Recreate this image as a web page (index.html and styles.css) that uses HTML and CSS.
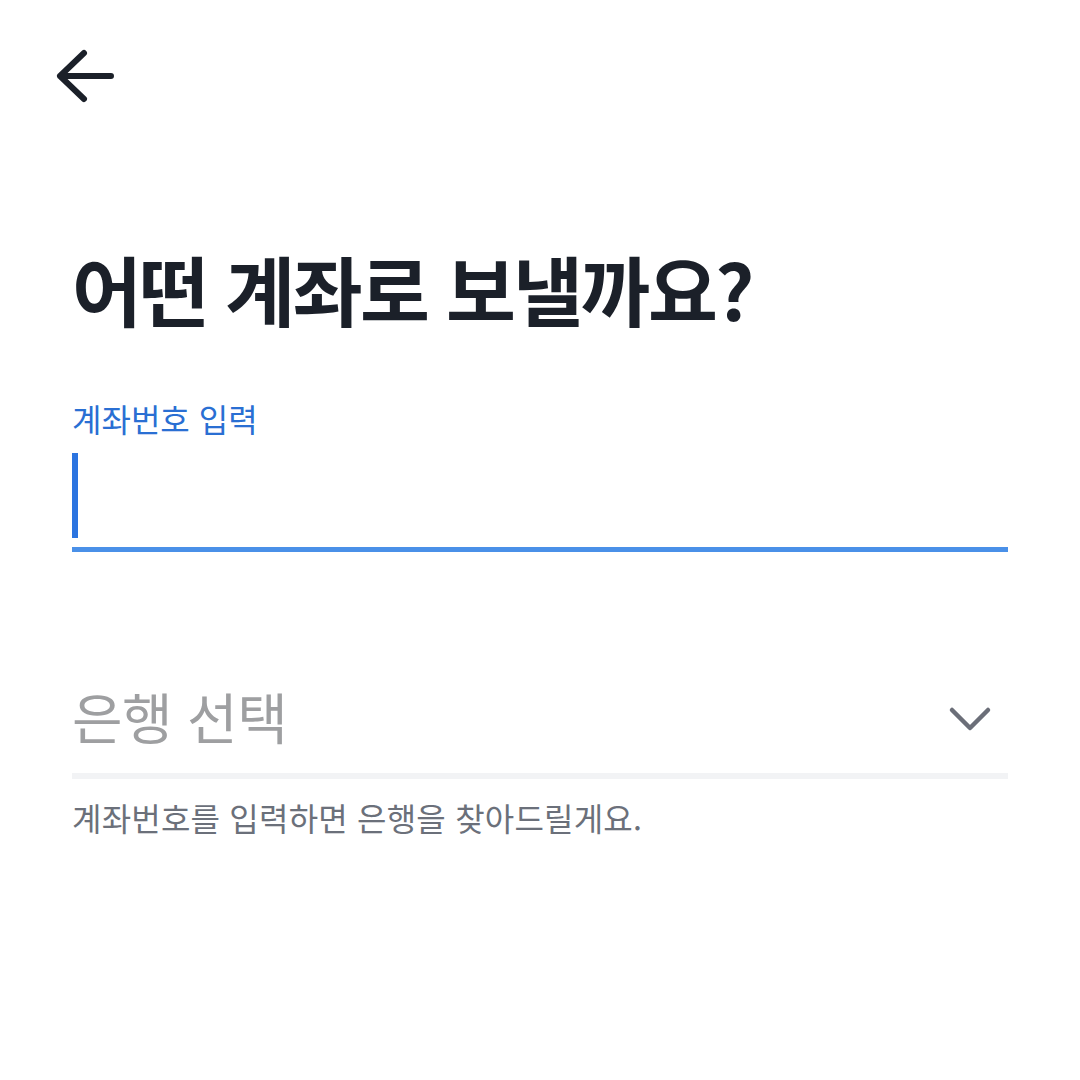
FILE: index.html
```html
<!DOCTYPE html>
<html lang="ko">
<head>
<meta charset="utf-8">
<link rel="stylesheet" href="styles.css">
</head>
<body>
<div class="page">
  <header class="topbar">
    <button class="back" aria-label="뒤로">
      <svg width="64" height="60" viewBox="0 0 64 60">
        <path d="M6 30 H57 M30 7 L6 30 L30 53" fill="none" stroke="#1b2029" stroke-width="6" stroke-linecap="round" stroke-linejoin="round"/>
      </svg>
    </button>
  </header>
  <h1 class="title">어떤 계좌로 보낼까요?</h1>
  <div class="field">
    <label class="field-label">계좌번호 입력</label>
    <div class="input-box"><span class="caret"></span></div>
  </div>
  <div class="bank">
    <div class="bank-row">
      <span class="bank-placeholder">은행 선택</span>
      <svg class="chev" width="44" height="30" viewBox="0 0 44 30">
        <path d="M4 5 L22 23 L40 5" fill="none" stroke="#6b6e78" stroke-width="4.5" stroke-linecap="round" stroke-linejoin="round"/>
      </svg>
    </div>
    <div class="bank-line"></div>
    <p class="hint">계좌번호를 입력하면 은행을 찾아드릴게요.</p>
  </div>
</div>
</body>
</html>
```
FILE: styles.css
```css
html, body {
  margin: 0;
  padding: 0;
  background: #ffffff;
}
body {
  font-family: "Noto Sans CJK KR", "Noto Sans", sans-serif;
  color: #1b2029;
}
.page {
  padding: 0 72px;
}
.topbar {
  height: 150px;
  display: flex;
  align-items: flex-start;
}
.back {
  margin: 46px 0 0 -18px;
  padding: 0;
  border: 0;
  background: none;
  display: block;
  line-height: 0;
}
.title {
  margin: 88px 0 0;
  font-size: 76px;
  font-weight: 700;
  letter-spacing: -2.6px;
  line-height: 100px;
  color: #1b2029;
}
.field {
  margin-top: 60px;
}
.field-label {
  display: block;
  font-size: 32px;
  line-height: 40px;
  color: #2a6fd3;
  letter-spacing: 0;
}
.input-box {
  margin-top: 15px;
  height: 94px;
  border-bottom: 5px solid #4a90e8;
  display: flex;
  align-items: flex-start;
}
.caret {
  display: block;
  width: 6px;
  height: 85px;
  background: #2b74e0;
}
.bank {
  margin-top: 133px;
}
.bank-row {
  display: flex;
  align-items: center;
  justify-content: space-between;
  height: 60px;
}
.bank-placeholder {
  font-size: 55px;
  line-height: 60px;
  color: #9e9fa1;
  letter-spacing: -0.5px;
}
.chev {
  margin: 10px 16px 0 0;
}
.bank-line {
  margin-top: 28px;
  height: 6px;
  background: #f2f3f5;
}
.hint {
  margin: 16px 0 0;
  font-size: 32px;
  line-height: 44px;
  color: #6b707a;
  letter-spacing: 0.2px;
}
```
